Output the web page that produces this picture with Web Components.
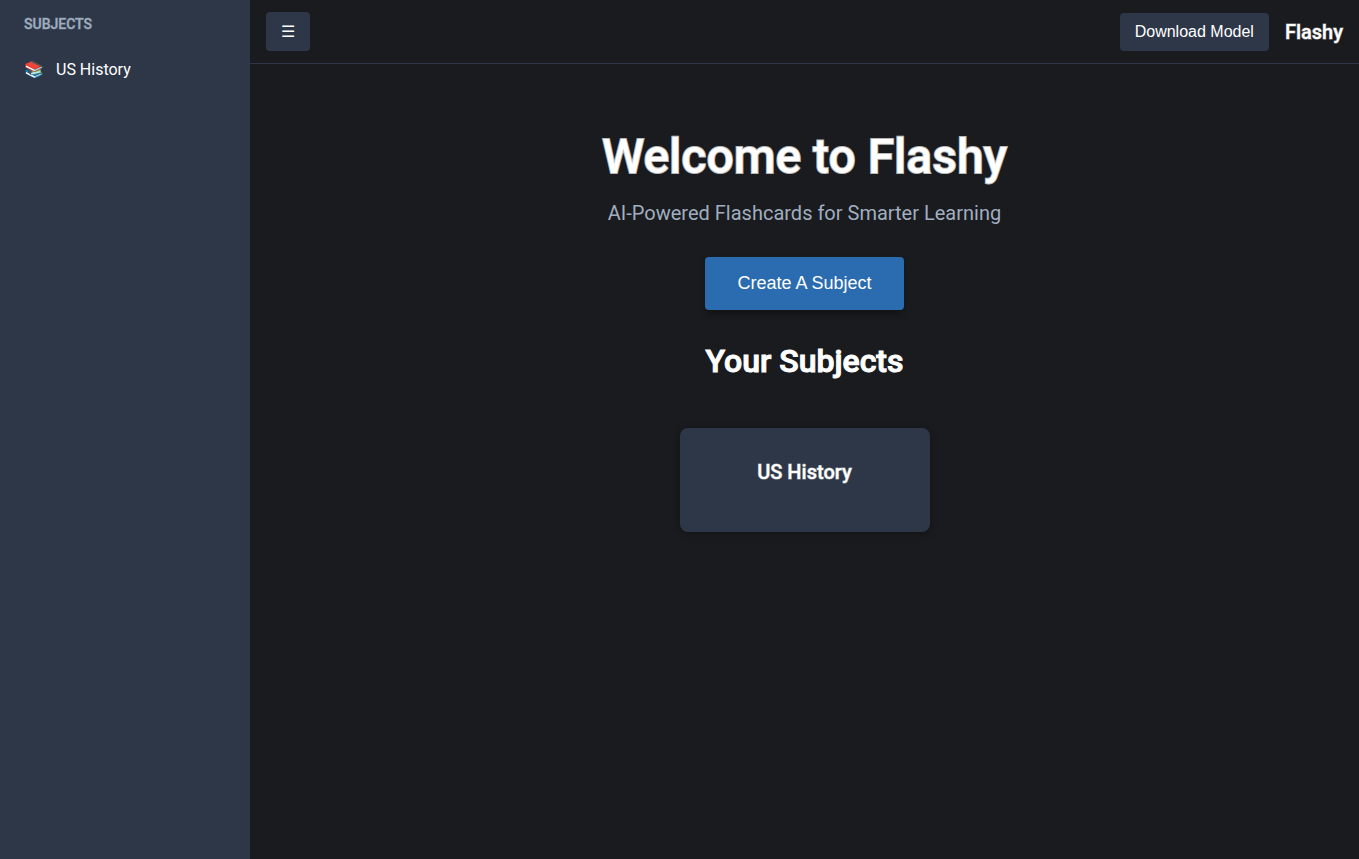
<!DOCTYPE html>
<html lang="en">
<head>
<meta charset="utf-8">
<meta name="viewport" content="width=device-width, initial-scale=1">
<title>Flashy</title>
<style>
  :root {
    --bg: #1a1b1e;
    --panel: #2d3748;
    --muted: #a0aec0;
    --accent: #2b6cb0;
    --bold-stroke: 1px rgba(255, 255, 255, .5);
    --muted-stroke: 1px rgba(160, 174, 192, .4);
  }
  body {
    margin: 0;
    background: var(--bg);
    color: #fff;
    font: 16px/24px Roboto, sans-serif;
  }
</style>
</head>
<body>
<flashy-app>
  <side-bar slot="sidebar" heading="Subjects">
    <subject-link icon="📚">US History</subject-link>
  </side-bar>
  <top-bar slot="header">
    <flashy-button slot="start" kind="icon" label="Toggle sidebar">☰</flashy-button>
    <flashy-button slot="end">Download Model</flashy-button>
    <span slot="brand">Flashy</span>
  </top-bar>
  <welcome-hero heading="Welcome to Flashy" tagline="AI-Powered Flashcards for Smarter Learning">
    <flashy-button kind="primary">Create A Subject</flashy-button>
  </welcome-hero>
  <subject-list heading="Your Subjects">
    <subject-card>US History</subject-card>
  </subject-list>
</flashy-app>

<script>
class ShadowElement extends HTMLElement {
  constructor() {
    super();
    this.attachShadow({ mode: 'open' });
  }
  connectedCallback() {
    const template = document.createElement('template');
    template.innerHTML = this.render();
    this.shadowRoot.replaceChildren(template.content.cloneNode(true));
  }
  attr(name) { return this.getAttribute(name) || ''; }
}

customElements.define('flashy-app', class extends ShadowElement {
  render() {
    return `<style>
      :host { display: flex; min-height: 100vh; }
      .page { flex: 1; min-width: 0; display: flex; flex-direction: column; }
      main { padding: 64px 16px; text-align: center; }
    </style>
    <slot name="sidebar"></slot>
    <div class="page"><slot name="header"></slot><main><slot></slot></main></div>`;
  }
});

customElements.define('side-bar', class extends ShadowElement {
  render() {
    return `<style>
      :host { display: block; flex: 0 0 250px; background: var(--panel); }
      h2 { margin: 0; padding: 12px 24px; font-size: 14px; line-height: 24px; font-weight: 500; -webkit-text-stroke: var(--muted-stroke); color: var(--muted); text-transform: uppercase; }
    </style>
    <nav aria-labelledby="title"><h2 id="title">${this.attr('heading')}</h2><slot></slot></nav>`;
  }
});

customElements.define('subject-link', class extends ShadowElement {
  render() {
    return `<style>
      :host { display: block; }
      a { display: flex; align-items: center; padding: 10px 24px; color: #fff; text-decoration: none; }
      .icon { flex: 0 0 32px; }
    </style>
    <a href="#"><span class="icon" aria-hidden="true">${this.attr('icon')}</span><slot></slot></a>`;
  }
});

customElements.define('top-bar', class extends ShadowElement {
  render() {
    return `<style>
      :host { display: block; }
      header { display: flex; align-items: center; justify-content: space-between; padding: 12px 16px; border-bottom: 1px solid var(--panel); }
      .end { display: flex; align-items: center; gap: 16px; }
      .brand { font-size: 20px; font-weight: 500; -webkit-text-stroke: var(--bold-stroke); }
    </style>
    <header><slot name="start"></slot><div class="end"><slot name="end"></slot><div class="brand"><slot name="brand"></slot></div></div></header>`;
  }
});

customElements.define('flashy-button', class extends ShadowElement {
  render() {
    const label = this.attr('label');
    return `<style>
      :host { display: inline-flex; }
      button { border: 0; border-radius: 4px; padding: 10px 15px; background: var(--panel); color: #fff; font: 16px/18px "Liberation Sans", Arial, sans-serif; cursor: pointer; }
      :host([kind="icon"]) button { line-height: 19px; }
      :host([kind="primary"]) button { padding: 16px 32px; background: var(--accent); font-size: 18px; line-height: 21px; box-shadow: 0 4px 6px rgba(0, 0, 0, .3); }
    </style>
    <button type="button"${label ? ` aria-label="${label}"` : ''}><slot></slot></button>`;
  }
});

customElements.define('welcome-hero', class extends ShadowElement {
  render() {
    return `<style>
      :host { display: block; }
      h1 { margin: 0 0 16px; font-size: 48px; line-height: 57px; font-weight: 500; -webkit-text-stroke: 2px rgba(255, 255, 255, .7); }
      p { margin: 0 0 32px; font-size: 20px; line-height: 24px; color: var(--muted); }
    </style>
    <section><h1>${this.attr('heading')}</h1><p>${this.attr('tagline')}</p><slot></slot></section>`;
  }
});

customElements.define('subject-list', class extends ShadowElement {
  render() {
    return `<style>
      :host { display: block; margin-top: 32px; }
      h2 { margin: 0 0 48px; font-size: 32px; line-height: 38px; font-weight: 500; -webkit-text-stroke: 1px; }
      .cards { display: flex; flex-wrap: wrap; justify-content: center; gap: 32px; }
    </style>
    <section><h2>${this.attr('heading')}</h2><div class="cards"><slot></slot></div></section>`;
  }
});

customElements.define('subject-card', class extends ShadowElement {
  render() {
    return `<style>
      :host { display: block; box-sizing: border-box; flex: 0 1 250px; padding: 32px 32px 48px; background: var(--panel); border-radius: 8px; box-shadow: 0 2px 8px rgba(0, 0, 0, .3); }
      h3 { margin: 0; font-size: 20px; line-height: 24px; font-weight: 500; -webkit-text-stroke: var(--bold-stroke); }
    </style>
    <h3><slot></slot></h3>`;
  }
});
</script>
</body>
</html>
